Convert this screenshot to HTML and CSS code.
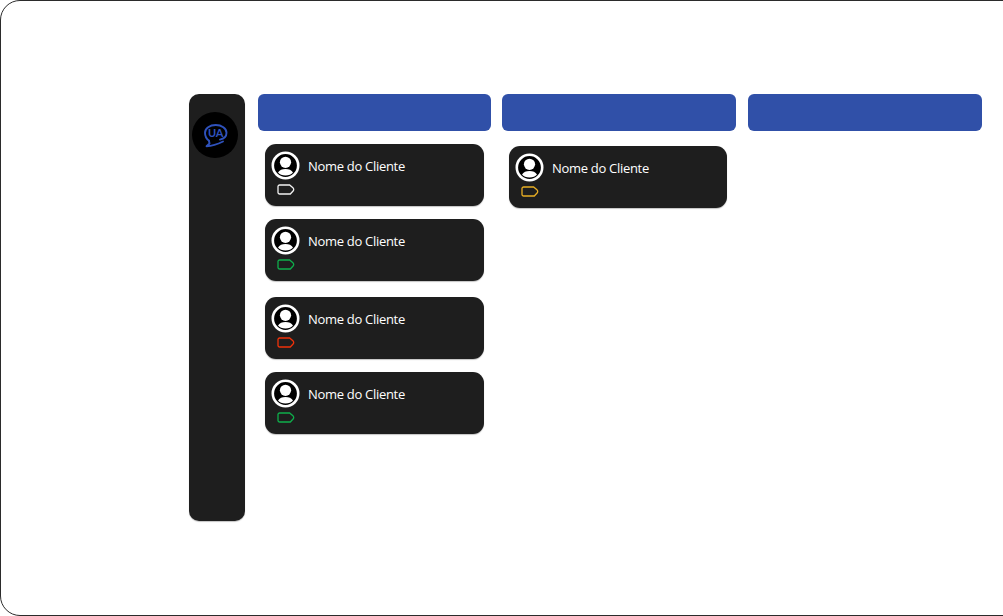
FILE: index.html
```html
<!DOCTYPE html>
<html lang="pt">
<head>
<meta charset="utf-8">
<title>Quadro de clientes</title>
<link rel="stylesheet" href="styles.css">
</head>
<body>
<svg class="defs" width="0" height="0" aria-hidden="true">
  <symbol id="avatar" viewBox="0 0 29 29">
    <circle cx="14.500" cy="14.500" r="12.700" fill="#000" stroke="#fff" stroke-width="2.600"/>
    <circle cx="14.500" cy="11.300" r="5.600" fill="#fff"/>
    <path d="M7 21.500C8.500 19 11 18 14.500 18s6 1 7.500 3.500C20.500 23.300 17.800 24.500 14.500 24.500S8.500 23.300 7 21.500z" fill="#fff"/>
  </symbol>
  <symbol id="tag" viewBox="0 0 18 11">
    <path d="M2.600 1h10l3.300 2.800a2.200 2.200 0 0 1 .2 3.200L13.300 10H2.600A1.600 1.600 0 0 1 1 8.400V2.600A1.600 1.600 0 0 1 2.600 1z" fill="none" stroke="currentColor" stroke-width="1.300"/>
  </symbol>
</svg>
<main class="frame">
  <aside class="sidebar">
    <div class="logo">
      <svg class="logo-mark" viewBox="0 0 46 46" width="46" height="46">
        <path class="logo-line" d="M17 28.800C14.500 27 13 24 13 20.800 13 16.300 17.800 13 23.700 13s10.800 3.300 10.800 7.800c0 3.800-2.500 6-6.500 6.800"/>
        <path class="logo-line" d="M17 28.800l.5 2.700-3 2.700c6-.2 11.500-2.200 16.500-4.700"/>
        <text class="logo-text" x="23.700" y="24.500">UA</text>
      </svg>
    </div>
  </aside>
  <section class="board">
    <div class="column column-first">
      <h2 class="column-head"></h2>
      <div class="cards cards-first">
        <article class="card">
          <div class="card-person"><svg class="avatar"><use href="#avatar"/></svg><span class="name">Nome do Cliente</span></div>
          <svg class="tag tag-white"><use href="#tag"/></svg>
        </article>
        <article class="card">
          <div class="card-person"><svg class="avatar"><use href="#avatar"/></svg><span class="name">Nome do Cliente</span></div>
          <svg class="tag tag-green"><use href="#tag"/></svg>
        </article>
        <article class="card card-spaced">
          <div class="card-person"><svg class="avatar"><use href="#avatar"/></svg><span class="name">Nome do Cliente</span></div>
          <svg class="tag tag-red"><use href="#tag"/></svg>
        </article>
        <article class="card">
          <div class="card-person"><svg class="avatar"><use href="#avatar"/></svg><span class="name">Nome do Cliente</span></div>
          <svg class="tag tag-green"><use href="#tag"/></svg>
        </article>
      </div>
    </div>
    <div class="column">
      <h2 class="column-head"></h2>
      <div class="cards cards-second">
        <article class="card card-narrow">
          <div class="card-person"><svg class="avatar"><use href="#avatar"/></svg><span class="name">Nome do Cliente</span></div>
          <svg class="tag tag-yellow"><use href="#tag"/></svg>
        </article>
      </div>
    </div>
    <div class="column column-last">
      <h2 class="column-head"></h2>
    </div>
  </section>
</main>
</body>
</html>
```
FILE: styles.css
```css
html, body {
  margin: 0;
  height: 100%;
  overflow: hidden;
  background: #fff;
}

.defs {
  display: block;
  height: 0;
}

.frame {
  box-sizing: border-box;
  display: flex;
  align-items: flex-start;
  width: 1024px;
  height: 616px;
  padding: 93px 0 0 188px;
  border: 1px solid #2b2b2b;
  border-radius: 20px;
  font-family: "Open Sans", "Noto Sans", sans-serif;
}

.sidebar {
  box-sizing: border-box;
  flex: none;
  width: 56px;
  height: 427px;
  padding-top: 18px;
  background: #1e1e1e;
  border-radius: 10px;
  box-shadow: 0 1px 1px #c4c4c4;
}

.logo {
  width: 46px;
  height: 46px;
  margin: 0 auto 0 3px;
  border-radius: 50%;
  background: #000;
}

.logo-mark {
  display: block;
}

.logo-line {
  fill: none;
  stroke: #2f52bc;
  stroke-width: 1.900;
  stroke-linecap: round;
  stroke-linejoin: round;
}

.logo-text {
  fill: #2f52bc;
  font-family: "Lato", sans-serif;
  font-size: 11px;
  font-weight: 700;
  text-anchor: middle;
}

.board {
  display: flex;
  gap: 11px;
  margin-left: 13px;
}

.column {
  flex: none;
  width: 234px;
}

.column-first {
  width: 233px;
}

.column-last {
  margin-left: 1px;
}

.column-head {
  height: 37px;
  margin: 0;
  background: #3050a8;
  border-radius: 6px;
}

.cards {
  display: flex;
  flex-direction: column;
  gap: 13px;
  padding-left: 7px;
}

.cards-first {
  padding-top: 13px;
}

.cards-second {
  padding-top: 15px;
}

.card {
  box-sizing: border-box;
  width: 219px;
  height: 62px;
  padding: 7px 0 0 6px;
  background: #1e1e1e;
  border-radius: 11px;
  box-shadow: 0 1px 1px #c4c4c4;
}

.card-spaced {
  margin-top: 3px;
}

.card-narrow {
  width: 218px;
}

.card-person {
  display: flex;
  align-items: flex-start;
  gap: 8px;
}

.avatar {
  flex: none;
  width: 29px;
  height: 29px;
}

.name {
  color: #fff;
  font-size: 13px;
  letter-spacing: -0.3px;
  line-height: 31px;
  height: 29px;
}

.tag {
  display: block;
  width: 18px;
  height: 11px;
  margin: 4px 0 0 6px;
}

.tag-white { color: #f2f2f2; }
.tag-green { color: #0fae4b; }
.tag-red { color: #f0320a; }
.tag-yellow { color: #e8ae24; }
```
